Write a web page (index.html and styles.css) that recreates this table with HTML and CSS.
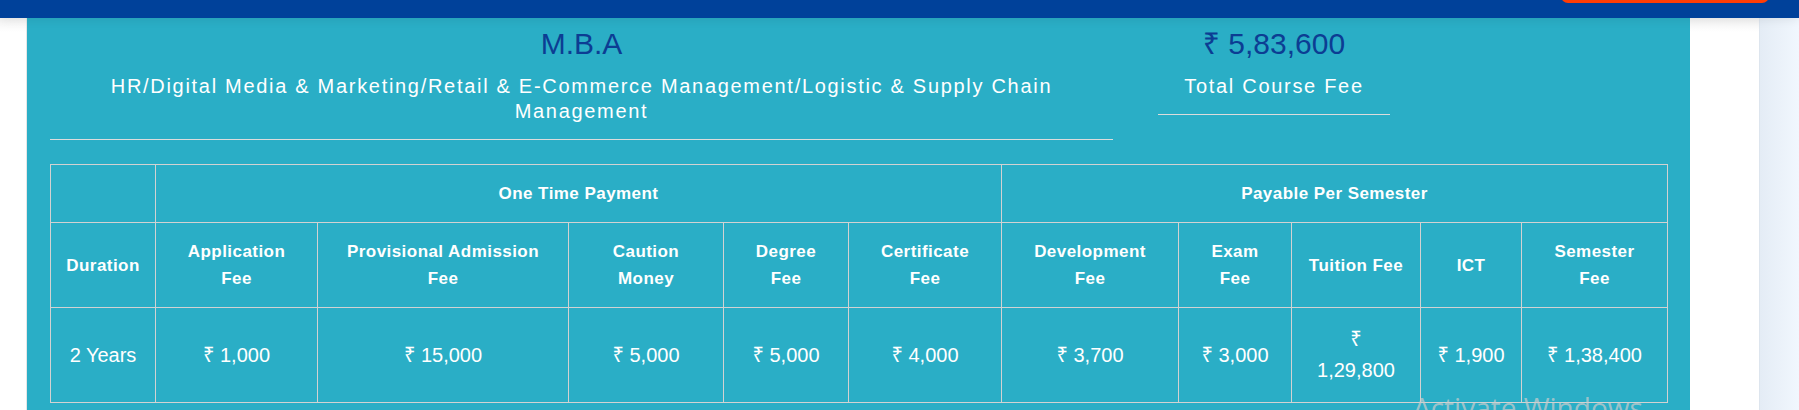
FILE: index.html
```html
<!DOCTYPE html>
<html lang="en">
<head>
<meta charset="utf-8">
<title>M.B.A Fee Structure</title>
<link rel="stylesheet" href="styles.css">
</head>
<body>
<header class="topbar">
  <span class="cta"></span>
</header>
<div class="page">
  <div class="gutter"></div>
  <section class="fee-card">
    <div class="summary">
      <div class="course-block">
        <h2 class="heading">M.B.A</h2>
        <p class="caption">HR/Digital Media &amp; Marketing/Retail &amp; E-Commerce Management/Logistic &amp; Supply Chain Management</p>
      </div>
      <div class="course-block">
        <h2 class="heading">₹ 5,83,600</h2>
        <p class="caption">Total Course Fee</p>
      </div>
    </div>
    <table class="fee-table">
      <colgroup>
        <col class="w-duration">
        <col class="w-application">
        <col class="w-provisional">
        <col class="w-caution">
        <col class="w-degree">
        <col class="w-certificate">
        <col class="w-development">
        <col class="w-exam">
        <col class="w-tuition">
        <col class="w-ict">
        <col class="w-semester">
      </colgroup>
      <thead>
        <tr>
          <th></th>
          <th colspan="5">One Time Payment</th>
          <th colspan="5">Payable Per Semester</th>
        </tr>
        <tr>
          <th>Duration</th>
          <th>Application<br>Fee</th>
          <th>Provisional Admission<br>Fee</th>
          <th>Caution<br>Money</th>
          <th>Degree<br>Fee</th>
          <th>Certificate<br>Fee</th>
          <th>Development<br>Fee</th>
          <th>Exam<br>Fee</th>
          <th>Tuition Fee</th>
          <th>ICT</th>
          <th>Semester<br>Fee</th>
        </tr>
      </thead>
      <tbody>
        <tr>
          <td>2 Years</td>
          <td>₹ 1,000</td>
          <td>₹ 15,000</td>
          <td>₹ 5,000</td>
          <td>₹ 5,000</td>
          <td>₹ 4,000</td>
          <td>₹ 3,700</td>
          <td>₹ 3,000</td>
          <td class="narrow">₹ 1,29,800</td>
          <td>₹ 1,900</td>
          <td>₹ 1,38,400</td>
        </tr>
      </tbody>
    </table>
  </section>
  <div class="spacer"></div>
  <aside class="side-panel"></aside>
</div>
<div class="watermark">Activate Windows</div>
</body>
</html>
```

FILE: styles.css
```css
* {
  box-sizing: border-box;
}

html, body {
  margin: 0;
  padding: 0;
}

body {
  width: 1799px;
  height: 410px;
  overflow: hidden;
  background: #ffffff;
  font-family: "Liberation Sans", Arial, "Noto Sans", "DejaVu Sans", sans-serif;
  position: relative;
}

.topbar {
  position: relative;
  height: 18px;
  background: #00419a;
  box-shadow: 0 2px 10px rgba(0, 0, 0, 0.08);
  z-index: 2;
}

.cta {
  position: absolute;
  top: -20px;
  right: 30px;
  width: 208px;
  height: 23px;
  border-radius: 7px;
  background: #ff3d06;
}

.page {
  display: flex;
  height: 392px;
}

.gutter {
  width: 27px;
  flex: none;
  border-right: 1px solid #e6e6e6;
  background: linear-gradient(to bottom, #f3f3f3, #ffffff 14px);
}

.fee-card {
  width: 1663px;
  flex: none;
  background: #2aaec6;
  padding: 8px 23px 0;
}

.summary {
  display: grid;
  grid-template-columns: 1063px 232px;
  column-gap: 45px;
  align-items: start;
}

.course-block {
  text-align: center;
  border-bottom: 1px solid #dcdcdc;
  padding-bottom: 15px;
}

.heading {
  margin: 0;
  font-size: 30px;
  line-height: 36px;
  font-weight: 400;
  color: #0c3d93;
}

.caption {
  margin: 12px 0 0;
  font-size: 20px;
  line-height: 25px;
  letter-spacing: 1.7px;
  color: #ffffff;
}

.fee-table {
  margin-top: 24px;
  width: 100%;
  table-layout: fixed;
  border-collapse: collapse;
  color: #ffffff;
  text-align: center;
}

.w-duration { width: 105px; }
.w-application { width: 162px; }
.w-provisional { width: 251px; }
.w-caution { width: 155px; }
.w-degree { width: 125px; }
.w-certificate { width: 153px; }
.w-development { width: 177px; }
.w-exam { width: 113px; }
.w-tuition { width: 129px; }
.w-ict { width: 101px; }
.w-semester { width: 146px; }

.fee-table th,
.fee-table td {
  border: 1px solid #d2d2d2;
  vertical-align: middle;
}

.fee-table th {
  padding: 15px 8px;
  font-size: 17px;
  line-height: 27px;
  font-weight: 700;
  letter-spacing: 0.45px;
  white-space: nowrap;
}

.fee-table td {
  padding: 16px 12px;
  font-size: 20px;
  line-height: 31px;
  font-weight: 400;
}

.fee-table td.narrow {
  padding-left: 20px;
  padding-right: 20px;
}

.spacer {
  width: 69px;
  flex: none;
  background: linear-gradient(to bottom, #f2f2f2, #ffffff 14px);
}

.side-panel {
  flex: 1;
  border-left: 1px solid #dde5ee;
  background: linear-gradient(to right, #e4ecf5, #f1f7fe);
}

.watermark {
  position: absolute;
  left: 1413px;
  top: 393px;
  font-family: "Open Sans", "Noto Sans", sans-serif;
  font-size: 28px;
  line-height: 28px;
  color: rgba(205, 205, 205, 0.7);
  white-space: nowrap;
  pointer-events: none;
}
```
